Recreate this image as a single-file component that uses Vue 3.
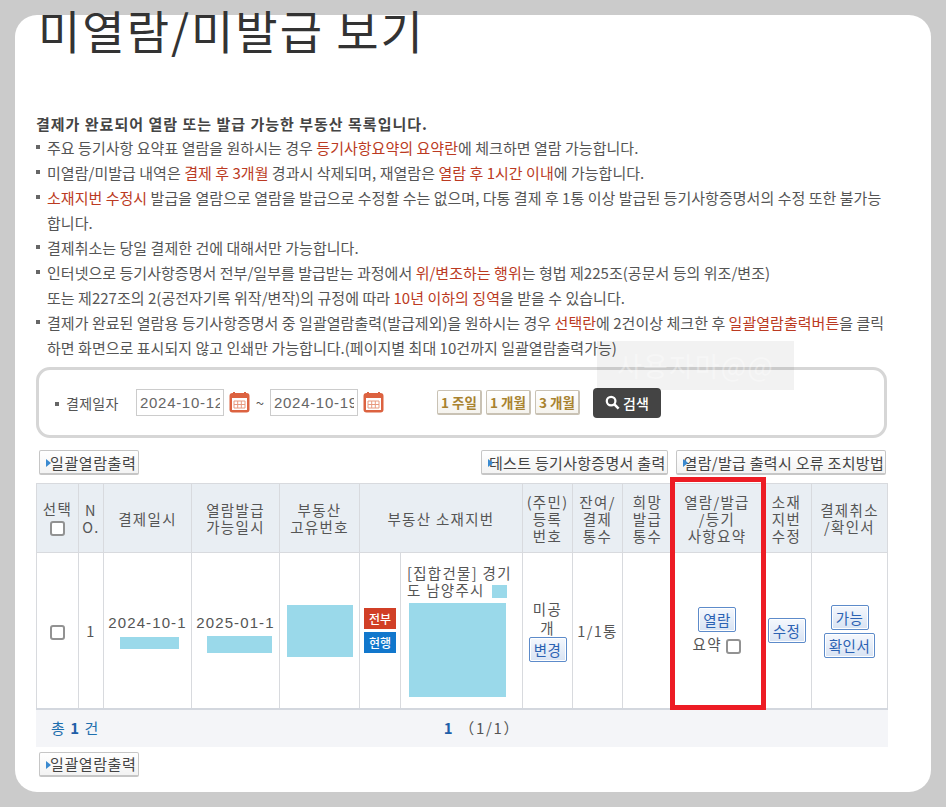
<script setup>
const columns = [42, 25, 88, 88, 80, 41, 122, 50, 50, 50, 89, 50, 76];

const notices = [
  [["주요 등기사항 요약표 열람을 원하시는 경우 "], ["등기사항요약의 요약란", true], ["에 체크하면 열람 가능합니다."]],
  [["미열람/미발급 내역은 "], ["결제 후 3개월", true], [" 경과시 삭제되며, 재열람은 "], ["열람 후 1시간 이내", true], ["에 가능합니다."]],
  [["소재지번 수정시", true], [" 발급을 열람으로 열람을 발급으로 수정할 수는 없으며, 다통 결제 후 1통 이상 발급된 등기사항증명서의 수정 또한 불가능\n합니다."]],
  [["결제취소는 당일 결제한 건에 대해서만 가능합니다."]],
  [["인터넷으로 등기사항증명서 전부/일부를 발급받는 과정에서 "], ["위/변조하는 행위", true], ["는 형법 제225조(공문서 등의 위조/변조)"], ["\n또는 제227조의 2(공전자기록 위작/변작)의 규정에 따라 "], ["10년 이하의 징역", true], ["을 받을 수 있습니다."]],
  [["결제가 완료된 열람용 등기사항증명서 중 일괄열람출력(발급제외)을 원하시는 경우 "], ["선택란", true], ["에 2건이상 체크한 후 "], ["일괄열람출력버튼", true], ["을 클릭\n하면 화면으로 표시되지 않고 인쇄만 가능합니다.(페이지별 최대 10건까지 일괄열람출력가능)"]],
];

const periods = ["1 주일", "1 개월", "3 개월"];
</script>

<template>
  <div class="card">
    <h1 class="title">미열람/미발급 보기</h1>

    <div class="intro">
      <p class="lead">결제가 완료되어 열람 또는 발급 가능한 부동산 목록입니다.</p>
      <ul class="notices">
        <li v-for="(parts, i) in notices" :key="i">
          <span v-for="(part, j) in parts" :key="j" :class="{ red: part[1] }">{{ part[0] }}</span>
        </li>
      </ul>
    </div>

    <!-- 화면 위에 깔린 반투명 워터마크 -->
    <div class="ghost">사용자마@@</div>

    <div class="search">
      <span class="search-label">결제일자</span>
      <input class="date" value="2024-10-12" />
      <svg class="cal" viewBox="0 0 21 21">
        <rect x="0.5" y="1" width="20" height="19.5" rx="3" fill="#dc6240" />
        <rect x="3" y="6" width="15" height="12" fill="#fff" />
        <path d="M5 0v4M16 0v4" stroke="#dc6240" stroke-width="2" />
        <path d="M5 9h11v7H5zM5 12.5h11M8.7 9v7M12.3 9v7" fill="none" stroke="#e89a80" stroke-width="1" />
      </svg>
      <span class="tilde">~</span>
      <input class="date" value="2024-10-19" />
      <svg class="cal" viewBox="0 0 21 21">
        <rect x="0.5" y="1" width="20" height="19.5" rx="3" fill="#dc6240" />
        <rect x="3" y="6" width="15" height="12" fill="#fff" />
        <path d="M5 0v4M16 0v4" stroke="#dc6240" stroke-width="2" />
        <path d="M5 9h11v7H5zM5 12.5h11M8.7 9v7M12.3 9v7" fill="none" stroke="#e89a80" stroke-width="1" />
      </svg>
      <div class="periods">
        <button v-for="p in periods" :key="p" class="period">{{ p }}</button>
      </div>
      <button class="search-btn">
        <svg viewBox="0 0 16 16" width="15" height="15">
          <circle cx="6.5" cy="6.5" r="4.6" fill="none" stroke="#fff" stroke-width="2.4" />
          <path d="M10 10l4.5 4.5" stroke="#fff" stroke-width="2.8" />
        </svg>
        검색
      </button>
    </div>

    <div class="actions">
      <button class="tool"><i class="arrow"></i>일괄열람출력</button>
      <div class="actions-right">
        <button class="tool tool-tight"><i class="arrow over"></i>테스트 등기사항증명서 출력</button>
        <button class="tool tool-tight"><i class="arrow over"></i>열람/발급 출력시 오류 조치방법</button>
      </div>
    </div>

    <div class="table-wrap">
      <table class="list">
        <colgroup>
          <col v-for="(w, i) in columns" :key="i" :style="{ width: w + 'px' }" />
        </colgroup>
        <thead>
          <tr>
            <th>선택<br /><input type="checkbox" class="check" /></th>
            <th>N<br />O.</th>
            <th>결제일시</th>
            <th>열람발급<br />가능일시</th>
            <th>부동산<br />고유번호</th>
            <th colspan="2">부동산 소재지번</th>
            <th>(주민)<br />등록<br />번호</th>
            <th>잔여/<br />결제<br />통수</th>
            <th>희망<br />발급<br />통수</th>
            <th>열람/발급<br />/등기<br />사항요약</th>
            <th>소재<br />지번<br />수정</th>
            <th>결제취소<br />/확인서</th>
          </tr>
        </thead>
        <tbody>
          <tr>
            <td><input type="checkbox" class="check" /></td>
            <td>1</td>
            <td class="date-cell first">2024-10-1<span class="mask mask-d1"></span></td>
            <td class="date-cell second">2025-01-1<span class="mask mask-d2"></span></td>
            <td><span class="mask mask-id"></span></td>
            <td>
              <span class="badge red-badge">전부</span>
              <span class="badge blue-badge">현행</span>
            </td>
            <td class="addr">
              <div class="addr-text">[집합건물] 경기도 남양주시 <span class="mask mask-sm"></span></div>
              <span class="mask mask-addr"></span>
            </td>
            <td class="undisclosed">미공<br />개<br /><button class="mini">변경</button></td>
            <td>1/1통</td>
            <td></td>
            <td>
              <button class="mini">열람</button>
              <div class="summary">요약 <input type="checkbox" class="check" /></div>
            </td>
            <td><button class="mini">수정</button></td>
            <td class="cancel">
              <button class="mini">가능</button>
              <button class="mini">확인서</button>
            </td>
          </tr>
        </tbody>
      </table>
      <div class="red-frame"></div>
      <div class="foot">
        <span class="total">총 <b>1</b> 건</span>
        <span class="pages"><b>1</b> （1/1）</span>
      </div>
    </div>

    <div class="actions bottom">
      <button class="tool"><i class="arrow"></i>일괄열람출력</button>
    </div>
  </div>
</template>

<style>
html,
body {
  margin: 0;
  height: 807px;
  overflow: hidden;
  background: #cbcbcb;
}
</style>

<style scoped>
* {
  box-sizing: border-box;
}

.card {
  position: relative;
  display: flow-root;
  width: 916px;
  height: 777px;
  margin: 15px;
  padding: 0 21px;
  background: #fff;
  border-radius: 22px;
  font-family: "Noto Sans CJK KR", sans-serif;
  font-size: 15px;
  color: #555;
}

.title {
  margin: -14px 0 0;
  height: 110px;
  padding-left: 2px;
  font-size: 46px;
  line-height: 56px;
  font-weight: 400;
  letter-spacing: 2px;
  color: #333;
  white-space: nowrap;
}

.intro {
  line-height: 25px;
  width: 850px;
}

.lead {
  margin: 0 0 -1px;
  font-weight: 700;
  color: #444;
  letter-spacing: 1px;
}

.notices {
  list-style: none;
  margin: 0;
  padding: 0;
  letter-spacing: 0.03px;
}

.notices li {
  position: relative;
  padding-left: 11px;
  white-space: pre;
}

.notices li::before {
  content: "";
  position: absolute;
  left: 0;
  top: 10px;
  width: 4px;
  height: 4px;
  background: #666;
}

.red {
  color: #bb3a22;
}

.ghost {
  position: absolute;
  z-index: 1;
  left: 582px;
  top: 326px;
  width: 197px;
  height: 49px;
  background: rgba(0, 0, 0, 0.05);
  color: rgba(255, 255, 255, 0.35);
  font-size: 27px;
  line-height: 49px;
  letter-spacing: 1px;
  text-align: center;
  white-space: nowrap;
  overflow: hidden;
}

.search {
  position: relative;
  display: flex;
  align-items: center;
  height: 71px;
  width: 851px;
  margin-top: 7px;
  padding-left: 16px;
  border: 3px solid #d6d6d6;
  border-radius: 14px;
}

.search-label {
  position: relative;
  width: 81px;
  padding-left: 11px;
  font-size: 14px;
  letter-spacing: 0.3px;
}

.search-label::before {
  content: "";
  position: absolute;
  left: 0;
  top: 9px;
  width: 4px;
  height: 4px;
  background: #666;
}

.date {
  width: 88px;
  height: 27px;
  padding: 2px 3px;
  border: 1px solid #ccc;
  font-family: "Liberation Sans", sans-serif;
  font-size: 15px;
  letter-spacing: 0.7px;
  color: #666;
  outline: none;
}

.cal {
  width: 21px;
  height: 21px;
  margin-left: 5px;
}

.tilde {
  width: 20px;
  text-align: center;
}

.periods {
  display: flex;
  gap: 4px;
  margin-left: 53px;
}

.period {
  width: 45px;
  height: 25px;
  padding: 0;
  border: 1px solid #c9c2b4;
  border-right-width: 2px;
  border-bottom-width: 2px;
  border-radius: 2px;
  background: linear-gradient(#fff, #f5f3ee);
  font: 700 13.5px "Noto Sans CJK KR", sans-serif;
  color: #a8822f;
}

.search-btn {
  display: flex;
  align-items: center;
  justify-content: center;
  gap: 3px;
  width: 68px;
  height: 30px;
  margin-left: 13px;
  padding: 0;
  border: 0;
  border-radius: 4px;
  background: #444;
  font: 500 14px "Noto Sans CJK KR", sans-serif;
  color: #fff;
}

.actions {
  display: flex;
  justify-content: space-between;
  width: 850px;
  margin-top: 12px;
  padding-left: 3px;
}

.actions-right {
  display: flex;
  gap: 8px;
}

.tool {
  position: relative;
  height: 25px;
  padding: 0 2px 0 10px;
  border: 1px solid #c6c6c6;
  border-bottom-width: 2px;
  border-radius: 2px;
  background: linear-gradient(#fff, #f3f3f3);
  font: 400 15px "Noto Sans CJK KR", sans-serif;
  letter-spacing: 0.6px;
  color: #444;
  white-space: nowrap;
}

.tool-tight {
  padding: 0 1px 0 7px;
  letter-spacing: 0.3px;
}

.arrow {
  position: absolute;
  left: 6px;
  top: 8px;
  border-left: 5px solid #3a8ad0;
  border-top: 4px solid transparent;
  border-bottom: 4px solid transparent;
}

.table-wrap {
  position: relative;
  width: 852px;
  margin-top: 8px;
}

.list {
  width: 852px;
  table-layout: fixed;
  border-collapse: collapse;
  font-size: 14.5px;
  letter-spacing: 1.3px;
  line-height: 17px;
}

.list th,
.list td {
  padding: 0;
  border: 1px solid #d8dade;
  text-align: center;
  vertical-align: middle;
}

.list th {
  height: 69px;
  background: #e9eef3;
  font-weight: 400;
}

.list td {
  height: 156px;
  color: #555;
}

.list tbody tr td {
  border-bottom: 2px solid #d3d7de;
}

.check {
  appearance: none;
  display: inline-block;
  width: 15px;
  height: 15px;
  margin: 0;
  border: 2px solid #929292;
  border-radius: 3px;
  background: #fff;
  vertical-align: middle;
}

.date-cell {
  white-space: nowrap;
  overflow: hidden;
  font-family: "Liberation Sans", sans-serif;
  font-size: 15px;
  letter-spacing: 1.1px;
}

.list td.first {
  padding-top: 3px;
}

.list td.second {
  padding-top: 7px;
}

.mask {
  display: block;
  margin: 0 auto;
  background: #9ad9ea;
}

.mask-d1 {
  width: 59px;
  height: 12px;
  margin: 6px 0 0 16px;
}

.mask-d2 {
  width: 65px;
  height: 17px;
  margin: 5px 0 0 15px;
}

.mask-id {
  width: 66px;
  height: 52px;
  margin-top: 2px;
}

.mask-sm {
  display: inline-block;
  width: 15px;
  height: 13px;
  margin-left: 3px;
  vertical-align: -2px;
}

.mask-addr {
  width: 97px;
  height: 94px;
  margin: 5px 0 0 2px;
}

.badge {
  display: block;
  width: 32px;
  height: 21px;
  margin: 0 auto;
  color: #fff;
  font-size: 12px;
  font-weight: 500;
  line-height: 21px;
  letter-spacing: 0;
}

.red-badge {
  background: #d13f26;
  margin-bottom: 3px;
}

.blue-badge {
  background: #1177cc;
}

.addr {
  text-align: left !important;
  padding: 0 0 0 6px !important;
}

.addr-text {
  padding-right: 6px;
}

.undisclosed {
  line-height: 19px;
}

.mini {
  display: inline-block;
  height: 25px;
  min-width: 38px;
  padding: 0 4px;
  border: 1px solid #5d8bca;
  border-radius: 2px;
  background: linear-gradient(#f5f8fd, #d8e3f3);
  box-shadow: inset 0 0 0 1px #fff;
  font: 400 14.5px "Noto Sans CJK KR", sans-serif;
  letter-spacing: 0.5px;
  color: #2b62b3;
  white-space: nowrap;
}

.summary {
  margin-top: 3px;
}

.cancel .mini {
  display: block;
  margin: 3px auto 0;
}

.red-frame {
  position: absolute;
  left: 634px;
  top: -6px;
  width: 96px;
  height: 233px;
  border: 5px solid #ed1c24;
}

.foot {
  position: relative;
  height: 37px;
  padding-left: 40px;
  background: #f4f5f8;
  line-height: 36px;
  text-align: center;
  letter-spacing: 1.7px;
}

.total {
  position: absolute;
  left: 15px;
  letter-spacing: 1px;
  color: #1f6fae;
}

.total b,
.pages b {
  color: #1f5fa8;
}

.pages {
  color: #555;
}

.actions.bottom {
  margin-top: 5px;
}
</style>
